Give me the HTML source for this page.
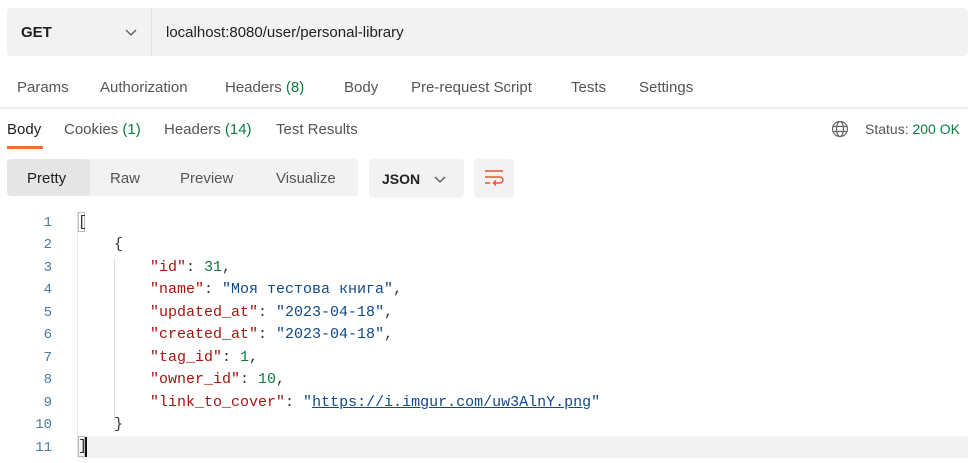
<!DOCTYPE html>
<html><head><meta charset="utf-8"><style>
*{margin:0;padding:0;box-sizing:border-box}
body{width:968px;height:463px;background:#fff;font-family:"Liberation Sans",sans-serif;position:relative;overflow:hidden;color:#212121}
.a{position:absolute;white-space:nowrap}
.g{color:#0a7d3e}
.mono{font-family:"Liberation Mono","DejaVu Sans Mono",monospace;font-size:15px}
.ln{position:absolute;left:0;width:52px;text-align:right;color:#4a7a9a;font-family:"Liberation Mono",monospace;font-size:14px}
.k{color:#a3150f}.s{color:#0f4a8a}.n{color:#0a7d3e}.p{color:#333}
</style></head><body>
<div class="a" style="left:7px;top:8px;width:961px;height:48px;background:#f2f2f2;border-radius:4px"></div>
<div class="a" style="left:151px;top:8px;width:1px;height:48px;background:#e0e0e0"></div>
<div class="a" style="left:21px;top:24px;font-size:15px;font-weight:bold">GET</div>
<svg class="a" style="left:125px;top:29px" width="12" height="8"><path d="M1 1l5 5 5-5" fill="none" stroke="#555" stroke-width="1.3"/></svg>
<div class="a" style="left:166px;top:24px;font-size:15px">localhost:8080/user/personal-library</div>
<div class="a" style="top:79px;left:17px;font-size:15px;color:#555">Params</div>
<div class="a" style="top:79px;left:100px;font-size:15px;color:#555">Authorization</div>
<div class="a" style="top:79px;left:225px;font-size:15px;color:#555">Headers <span class="g">(8)</span></div>
<div class="a" style="top:79px;left:344px;font-size:15px;color:#555">Body</div>
<div class="a" style="top:79px;left:411px;font-size:15px;color:#555">Pre-request Script</div>
<div class="a" style="top:79px;left:571px;font-size:15px;color:#555">Tests</div>
<div class="a" style="top:79px;left:639px;font-size:15px;color:#555">Settings</div>
<div class="a" style="left:0;top:107px;width:968px;height:2px;background:#ececec"></div>
<div class="a" style="top:121px;left:7px;font-size:15px">Body</div>
<div class="a" style="left:7px;top:146px;width:36px;height:3px;background:#f26b3a"></div>
<div class="a" style="top:121px;left:64px;font-size:15px;color:#555">Cookies <span class="g">(1)</span></div>
<div class="a" style="top:121px;left:164px;font-size:15px;color:#555">Headers <span class="g">(14)</span></div>
<div class="a" style="top:121px;left:276px;font-size:15px;color:#555">Test Results</div>
<svg class="a" style="left:831px;top:120px" width="18" height="18" viewBox="0 0 18 18" fill="none" stroke="#666" stroke-width="1.2"><circle cx="9" cy="9" r="7.5"/><ellipse cx="9" cy="9" rx="3.5" ry="7.5"/><path d="M2 6.5h14M2 11.5h14"/></svg>
<div class="a" style="top:121px;left:865px;font-size:14px;color:#555">Status: <span class="g">200 OK</span></div>
<div class="a" style="left:7px;top:159px;width:351px;height:37px;background:#f2f2f2;border-radius:4px"></div>
<div class="a" style="left:7px;top:159px;width:83px;height:37px;background:#e6e6e6;border-radius:4px"></div>
<div class="a" style="top:170px;left:27px;font-size:15px">Pretty</div>
<div class="a" style="top:170px;left:110px;font-size:15px;color:#555">Raw</div>
<div class="a" style="top:170px;left:180px;font-size:15px;color:#555">Preview</div>
<div class="a" style="top:170px;left:276px;font-size:15px;color:#555">Visualize</div>
<div class="a" style="left:369px;top:159px;width:95px;height:39px;background:#f2f2f2;border-radius:4px"></div>
<div class="a" style="top:171px;left:382px;font-size:14px;font-weight:bold">JSON</div>
<svg class="a" style="left:434px;top:176px" width="12" height="8"><path d="M1 1l5 5 5-5" fill="none" stroke="#555" stroke-width="1.3"/></svg>
<div class="a" style="left:474px;top:159px;width:40px;height:39px;background:#f2f2f2;border-radius:4px"></div>
<svg class="a" style="left:484px;top:169px" width="20" height="18" viewBox="0 0 20 18" fill="none" stroke="#e2572d" stroke-width="1.4"><path d="M1 2h18M1 8h15a3 3 0 0 1 0 6h-6M12 11.5l-2.5 2.5 2.5 2.5M1 14h5"/></svg>
<div class="a" style="left:77px;top:436px;width:891px;height:22px;background:#f3f3f3"></div>
<div class="a" style="left:78px;top:212px;width:7px;height:20px;border:1px solid #bbb"></div>
<div class="a" style="left:78px;top:436px;width:7px;height:21px;border:1px solid #bbb"></div>
<div class="a" style="left:85px;top:437px;width:2px;height:20px;background:#111"></div>
<div class="a" style="left:77px;top:212px;width:1px;height:246px;background:#e6e6e6"></div>
<div class="a" style="left:114px;top:258px;width:1px;height:163px;background:#e0e0e0"></div>
<div class="ln" style="top:215px">1</div><div class="ln" style="top:237px">2</div><div class="ln" style="top:260px">3</div><div class="ln" style="top:282px">4</div><div class="ln" style="top:305px">5</div><div class="ln" style="top:327px">6</div><div class="ln" style="top:350px">7</div><div class="ln" style="top:372px">8</div><div class="ln" style="top:395px">9</div><div class="ln" style="top:417px">10</div><div class="ln" style="top:440px">11</div>
<div class="a mono p" style="left:78px;top:214px">[</div>
<div class="a mono p" style="left:114px;top:236px">{</div>
<div class="a mono" style="left:150px;top:259px"><span class="k">"id"</span><span class="p">: </span><span class="n">31</span><span class="p">,</span></div>
<div class="a mono" style="left:150px;top:281px"><span class="k">"name"</span><span class="p">: </span><span class="s">"Моя тестова книга"</span><span class="p">,</span></div>
<div class="a mono" style="left:150px;top:304px"><span class="k">"updated_at"</span><span class="p">: </span><span class="s">"2023-04-18"</span><span class="p">,</span></div>
<div class="a mono" style="left:150px;top:326px"><span class="k">"created_at"</span><span class="p">: </span><span class="s">"2023-04-18"</span><span class="p">,</span></div>
<div class="a mono" style="left:150px;top:349px"><span class="k">"tag_id"</span><span class="p">: </span><span class="n">1</span><span class="p">,</span></div>
<div class="a mono" style="left:150px;top:371px"><span class="k">"owner_id"</span><span class="p">: </span><span class="n">10</span><span class="p">,</span></div>
<div class="a mono" style="left:150px;top:394px"><span class="k">"link_to_cover"</span><span class="p">: </span><span class="s">"<u>https://i.imgur.com/uw3AlnY.png</u>"</span></div>
<div class="a mono p" style="left:114px;top:416px">}</div>
<div class="a mono p" style="left:78px;top:438px">]</div>
</body></html>
